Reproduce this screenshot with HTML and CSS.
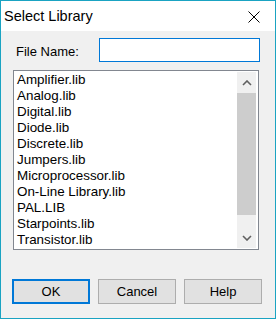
FILE: index.html
```html
<!DOCTYPE html>
<html lang="en">
<head>
  <meta charset="UTF-8">
  <meta name="viewport" content="width=device-width, initial-scale=1.0">
  <title>Select Library</title>
  <link rel="stylesheet" href="styles.css">
</head>
<body>
  <div class="window">
    <div class="titlebar">
      <span class="title">Select Library</span>
      <svg class="close" width="12" height="12" viewBox="0 0 12 12">
        <path d="M0.5 0.5 L11.5 11.5 M11.5 0.5 L0.5 11.5" stroke="#000" stroke-width="1" fill="none"/>
      </svg>
    </div>
    <div class="content">
      <div class="name-row">
        <label class="name-label">File Name:</label>
        <input type="text" class="name-input">
      </div>

      <div class="listbox">
        <ul class="items">
          <li>Amplifier.lib</li>
          <li>Analog.lib</li>
          <li>Digital.lib</li>
          <li>Diode.lib</li>
          <li>Discrete.lib</li>
          <li>Jumpers.lib</li>
          <li>Microprocessor.lib</li>
          <li>On-Line Library.lib</li>
          <li>PAL.LIB</li>
          <li>Starpoints.lib</li>
          <li>Transistor.lib</li>
        </ul>
        <div class="scrollbar">
          <div class="arrow">
            <svg width="10" height="6" viewBox="0 0 10 6">
              <path d="M1 5 L5 1 L9 5" stroke="#606060" stroke-width="1.6" fill="none"/>
            </svg>
          </div>
          <div class="track">
            <div class="thumb"></div>
          </div>
          <div class="arrow">
            <svg width="10" height="6" viewBox="0 0 10 6">
              <path d="M1 1 L5 5 L9 1" stroke="#606060" stroke-width="1.6" fill="none"/>
            </svg>
          </div>
        </div>
      </div>

      <div class="buttons">
        <button type="button" class="btn default">OK</button>
        <button type="button" class="btn">Cancel</button>
        <button type="button" class="btn">Help</button>
      </div>
    </div>
  </div>
</body>
</html>
```

FILE: styles.css
```css
html, body {
  margin: 0;
  padding: 0;
}
body {
  font-family: "Liberation Sans", Arial, sans-serif;
  background-color: #f0f0f0;
  width: 276px;
  height: 319px;
}
.window {
  box-sizing: border-box;
  width: 276px;
  height: 319px;
  border: 1px solid #1aa3c2;
  background-color: #f0f0f0;
  display: flex;
  flex-direction: column;
}
.titlebar {
  height: 30px;
  background-color: #fff;
  display: flex;
  align-items: center;
  justify-content: space-between;
}
.title {
  font-size: 14.5px;
  line-height: 30px;
  padding-left: 3px;
  color: #000;
}
.close {
  margin-right: 15px;
  margin-top: 1px;
}
.content {
  flex: 1;
}
.name-row {
  display: flex;
  align-items: center;
  margin-top: 7px;
  padding-left: 15px;
}
.name-label {
  font-size: 13px;
  width: 83px;
  padding-top: 2px;
}
.name-input {
  box-sizing: border-box;
  width: 161px;
  height: 24px;
  margin: 0;
  border: 1px solid #0078d7;
  background-color: #fff;
  outline: none;
}
.listbox {
  box-sizing: border-box;
  width: 246px;
  height: 180px;
  margin: 8px 0 0 12px;
  border: 1px solid #828790;
  background-color: #fff;
  display: flex;
}
.items {
  flex: 1;
  list-style: none;
  margin: 0;
  padding: 1px 0 0 3px;
  font-size: 13.4px;
  line-height: 16px;
  color: #000;
}
.scrollbar {
  width: 19px;
  margin: 1px 2px 1px 0;
  background-color: #f0f0f0;
  display: flex;
  flex-direction: column;
}
.arrow {
  height: 21px;
  display: flex;
  align-items: center;
  justify-content: center;
}
.track {
  flex: 1;
}
.thumb {
  height: 122px;
  background-color: #cdcdcd;
}
.buttons {
  display: flex;
  gap: 8px;
  margin: 29px 0 0 11px;
}
.btn {
  box-sizing: border-box;
  width: 78px;
  height: 25px;
  margin: 0;
  padding: 0;
  font-family: "Liberation Sans", Arial, sans-serif;
  font-size: 13px;
  color: #000;
  background-color: #e1e1e1;
  border: 1px solid #adadad;
  border-radius: 0;
}
.btn.default {
  border: 2px solid #0078d7;
}
```
